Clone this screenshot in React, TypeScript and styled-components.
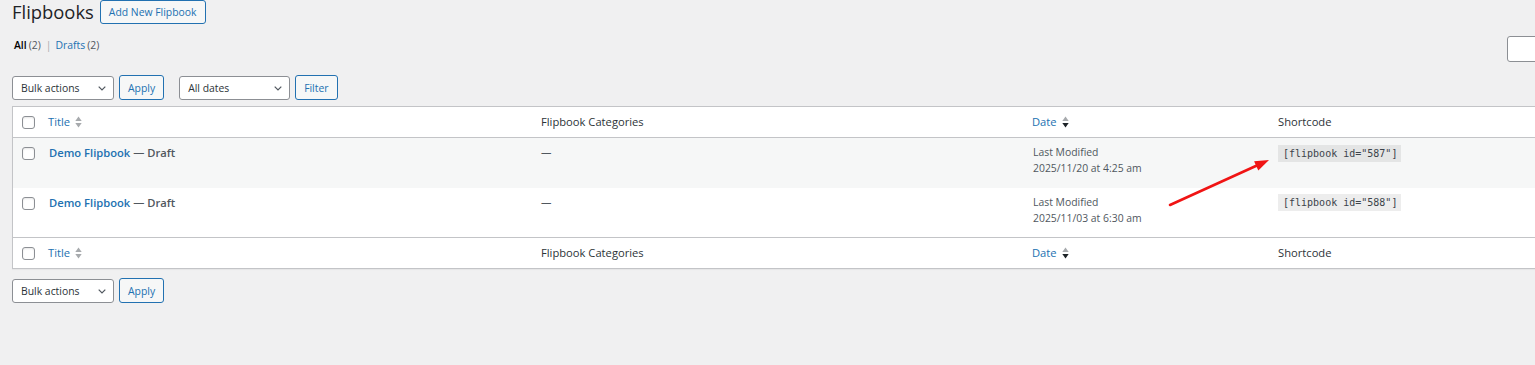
import React from 'react';
import styled, { createGlobalStyle } from 'styled-components';

const GlobalStyle = createGlobalStyle`
  *, *::before, *::after { box-sizing: border-box; }
  html, body { margin: 0; padding: 0; }
  body {
    background: #f0f0f1;
    color: #3c434a;
    font-family: 'Open Sans', 'Noto Sans', sans-serif;
    font-size: 10.4px;
    width: 1535px;
    height: 365px;
    overflow: hidden;
  }
`;

const Wrap = styled.div`
  position: relative;
  width: 1652px;
  padding-left: 12px;
`;

const HeadingRow = styled.div`
  display: flex;
  align-items: center;
  height: 24px;
`;

const PageTitle = styled.h1`
  margin: 0 6px 0 0;
  font-size: 18.4px;
  font-weight: 400;
  line-height: 24px;
  color: #1d2327;
`;

const Button = styled.button<{ $primaryOutline?: boolean }>`
  height: ${(p) => (p.$primaryOutline ? '24px' : '25px')};
  padding: 0 8px;
  border: 1px solid #2271b1;
  border-radius: 3px;
  background: #f6f7f7;
  color: #2271b1;
  font-family: inherit;
  font-size: 10.4px;
  line-height: 22px;
  cursor: pointer;
`;

const FilterRow = styled.div`
  display: flex;
  justify-content: space-between;
  align-items: flex-start;
  margin-top: 11px;
  height: 27px;
`;

const Subsubsub = styled.ul`
  display: flex;
  margin: 0;
  padding: 0 0 0 2px;
  list-style: none;
  line-height: 20px;
  color: #50575e;
`;

const ViewLink = styled.a<{ $current?: boolean }>`
  margin-right: 2px;
  color: ${(p) => (p.$current ? '#000' : '#2271b1')};
  font-weight: ${(p) => (p.$current ? 600 : 400)};
  text-decoration: none;
`;

const Sep = styled.span`
  margin: 0 4px 0 5px;
  color: #a7aaad;
`;

const SearchInput = styled.input`
  margin-top: 1px;
  width: 145px;
  height: 26px;
  border: 1px solid #8c8f94;
  border-radius: 3px;
  background: #fff;
`;

const Tablenav = styled.div<{ $top?: number; $bottom?: number }>`
  display: flex;
  align-items: flex-start;
  height: 25px;
  margin-top: ${(p) => p.$top ?? 0}px;
  margin-bottom: ${(p) => p.$bottom ?? 0}px;
`;

const SelectBox = styled.div<{ $width: number }>`
  display: flex;
  align-items: center;
  justify-content: space-between;
  width: ${(p) => p.$width}px;
  height: 24px;
  margin-top: 1px;
  margin-right: 5px;
  padding: 0 7px 0 8px;
  border: 1px solid #8c8f94;
  border-radius: 3px;
  background: #fff;
  color: #2c3338;
  font-size: 10.4px;
`;

const Gap = styled.span`
  flex: none;
  width: 15px;
`;

const Table = styled.table`
  width: 1640px;
  table-layout: fixed;
  border-spacing: 0;
  border: 1px solid #c3c4c7;
  background: #fff;
  box-shadow: 0 1px 1px rgba(0, 0, 0, 0.04);
`;

const HeadCell = styled.th<{ $foot?: boolean }>`
  height: 30px;
  padding: 6px 8px;
  text-align: left;
  vertical-align: middle;
  font-size: 11.2px;
  font-weight: 400;
  line-height: 18px;
  color: #2c3338;
  border-bottom: ${(p) => (p.$foot ? 'none' : '1px solid #c3c4c7')};
  border-top: ${(p) => (p.$foot ? '1px solid #c3c4c7' : 'none')};
`;

const CheckCell = styled.th`
  padding: 9px 0 0 9px;
  vertical-align: top;
`;

const HeadCheckCell = styled(CheckCell)<{ $foot?: boolean }>`
  height: 30px;
  border-bottom: ${(p) => (p.$foot ? 'none' : '1px solid #c3c4c7')};
  border-top: ${(p) => (p.$foot ? '1px solid #c3c4c7' : 'none')};
`;

const Row = styled.tr<{ $alt?: boolean }>`
  height: 49.5px;
  background: ${(p) => (p.$alt ? '#f6f7f7' : '#fff')};
`;

const Cell = styled.td<{ $pad?: number }>`
  padding: 6.4px 8px 0 ${(p) => p.$pad ?? 8}px;
  vertical-align: top;
  font-size: 10.4px;
  line-height: 16px;
  color: #50575e;
`;

const Checkbox = styled.span`
  display: block;
  width: 13px;
  height: 13px;
  border: 1px solid #8c8f94;
  border-radius: 3px;
  background: #fff;
  box-shadow: inset 0 1px 2px rgba(0, 0, 0, 0.1);
`;

const SortLink = styled.a`
  display: inline-flex;
  align-items: center;
  color: #2271b1;
  text-decoration: none;
`;

const SortIcon = styled.svg`
  margin-left: 5px;
`;

const RowTitle = styled.strong`
  font-size: 11.2px;
  font-weight: 600;
  line-height: 18px;
  color: #50575e;
`;

const TitleLink = styled.a`
  color: #2271b1;
  text-decoration: none;
`;

const Shortcode = styled.code`
  display: inline-block;
  margin-top: 0.5px;
  padding: 2px 4px 2px 5px;
  background: rgba(0, 0, 0, 0.07);
  font-family: 'DejaVu Sans Mono', 'Liberation Mono', monospace;
  font-size: 10px;
  line-height: 13px;
  color: #3c434a;
`;

const Annotation = styled.svg`
  position: absolute;
  left: 1160px;
  top: 150px;
  pointer-events: none;
`;

const Chevron = () => (
  <svg width="8" height="5" viewBox="0 0 8 5">
    <path d="M0.7 0.7 L4 4 L7.3 0.7" fill="none" stroke="#50575e" strokeWidth="1.2" />
  </svg>
);

const Sorter: React.FC<{ active?: 'asc' | 'desc' }> = ({ active }) => (
  <SortIcon width="7" height="12" viewBox="0 0 7 12">
    <polygon points="0.3,5 3.5,0.6 6.7,5" fill={active === 'asc' ? '#1d2327' : '#a7aaad'} />
    <polygon points="0.3,7 3.5,11.4 6.7,7" fill={active === 'desc' ? '#1d2327' : '#a7aaad'} />
  </SortIcon>
);

const BulkBar: React.FC<{ filters?: boolean; top?: number; bottom?: number }> = ({ filters, top, bottom }) => (
  <Tablenav $top={top} $bottom={bottom}>
    <SelectBox $width={102}>
      Bulk actions
      <Chevron />
    </SelectBox>
    <Button>Apply</Button>
    {filters && (
      <>
        <Gap />
        <SelectBox $width={111}>
          All dates
          <Chevron />
        </SelectBox>
        <Button>Filter</Button>
      </>
    )}
  </Tablenav>
);

const HeaderRow: React.FC<{ foot?: boolean }> = ({ foot }) => (
  <tr>
    <HeadCheckCell $foot={foot}>
      <Checkbox />
    </HeadCheckCell>
    <HeadCell $foot={foot}>
      <SortLink href="#">
        Title
        <Sorter />
      </SortLink>
    </HeadCell>
    <HeadCell $foot={foot}>Flipbook Categories</HeadCell>
    <HeadCell $foot={foot}>
      <SortLink href="#">
        Date
        <Sorter active="desc" />
      </SortLink>
    </HeadCell>
    <HeadCell $foot={foot}>Shortcode</HeadCell>
  </tr>
);

const posts = [
  { id: 587, date: '2025/11/20 at 4:25 am' },
  { id: 588, date: '2025/11/03 at 6:30 am' },
];

const App: React.FC = () => (
  <>
    <GlobalStyle />
    <Wrap>
      <HeadingRow>
        <PageTitle>Flipbooks</PageTitle>
        <Button $primaryOutline>Add New Flipbook</Button>
      </HeadingRow>

      <FilterRow>
        <Subsubsub>
          <li>
            <ViewLink href="#" $current>All</ViewLink>(2)
            <Sep>|</Sep>
          </li>
          <li>
            <ViewLink href="#">Drafts</ViewLink>(2)
          </li>
        </Subsubsub>
        <SearchInput type="search" />
      </FilterRow>

      <BulkBar filters top={13} bottom={6} />

      <Table>
        <colgroup>
          <col style={{ width: 27 }} />
          <col style={{ width: 493 }} />
          <col style={{ width: 491 }} />
          <col style={{ width: 246 }} />
          <col />
        </colgroup>
        <thead>
          <HeaderRow />
        </thead>
        <tbody>
          {posts.map((post, i) => (
            <Row key={post.id} $alt={i % 2 === 0}>
              <CheckCell>
                <Checkbox />
              </CheckCell>
              <Cell $pad={9}>
                <RowTitle>
                  <TitleLink href="#">Demo Flipbook</TitleLink> — Draft
                </RowTitle>
              </Cell>
              <Cell>—</Cell>
              <Cell $pad={9}>
                Last Modified
                <br />
                {post.date}
              </Cell>
              <Cell>
                <Shortcode>[flipbook id="{post.id}"]</Shortcode>
              </Cell>
            </Row>
          ))}
        </tbody>
        <tfoot>
          <HeaderRow foot />
        </tfoot>
      </Table>

      <BulkBar top={9} />

      <Annotation width="120" height="64" viewBox="1160 150 120 64">
        <line x1="1170" y1="205" x2="1258" y2="165" stroke="#f01414" strokeWidth="2.6" strokeLinecap="round" />
        <polygon points="1269,160 1258.3,170.4 1254.1,161.2" fill="#f01414" />
      </Annotation>
    </Wrap>
  </>
);

export default App;
